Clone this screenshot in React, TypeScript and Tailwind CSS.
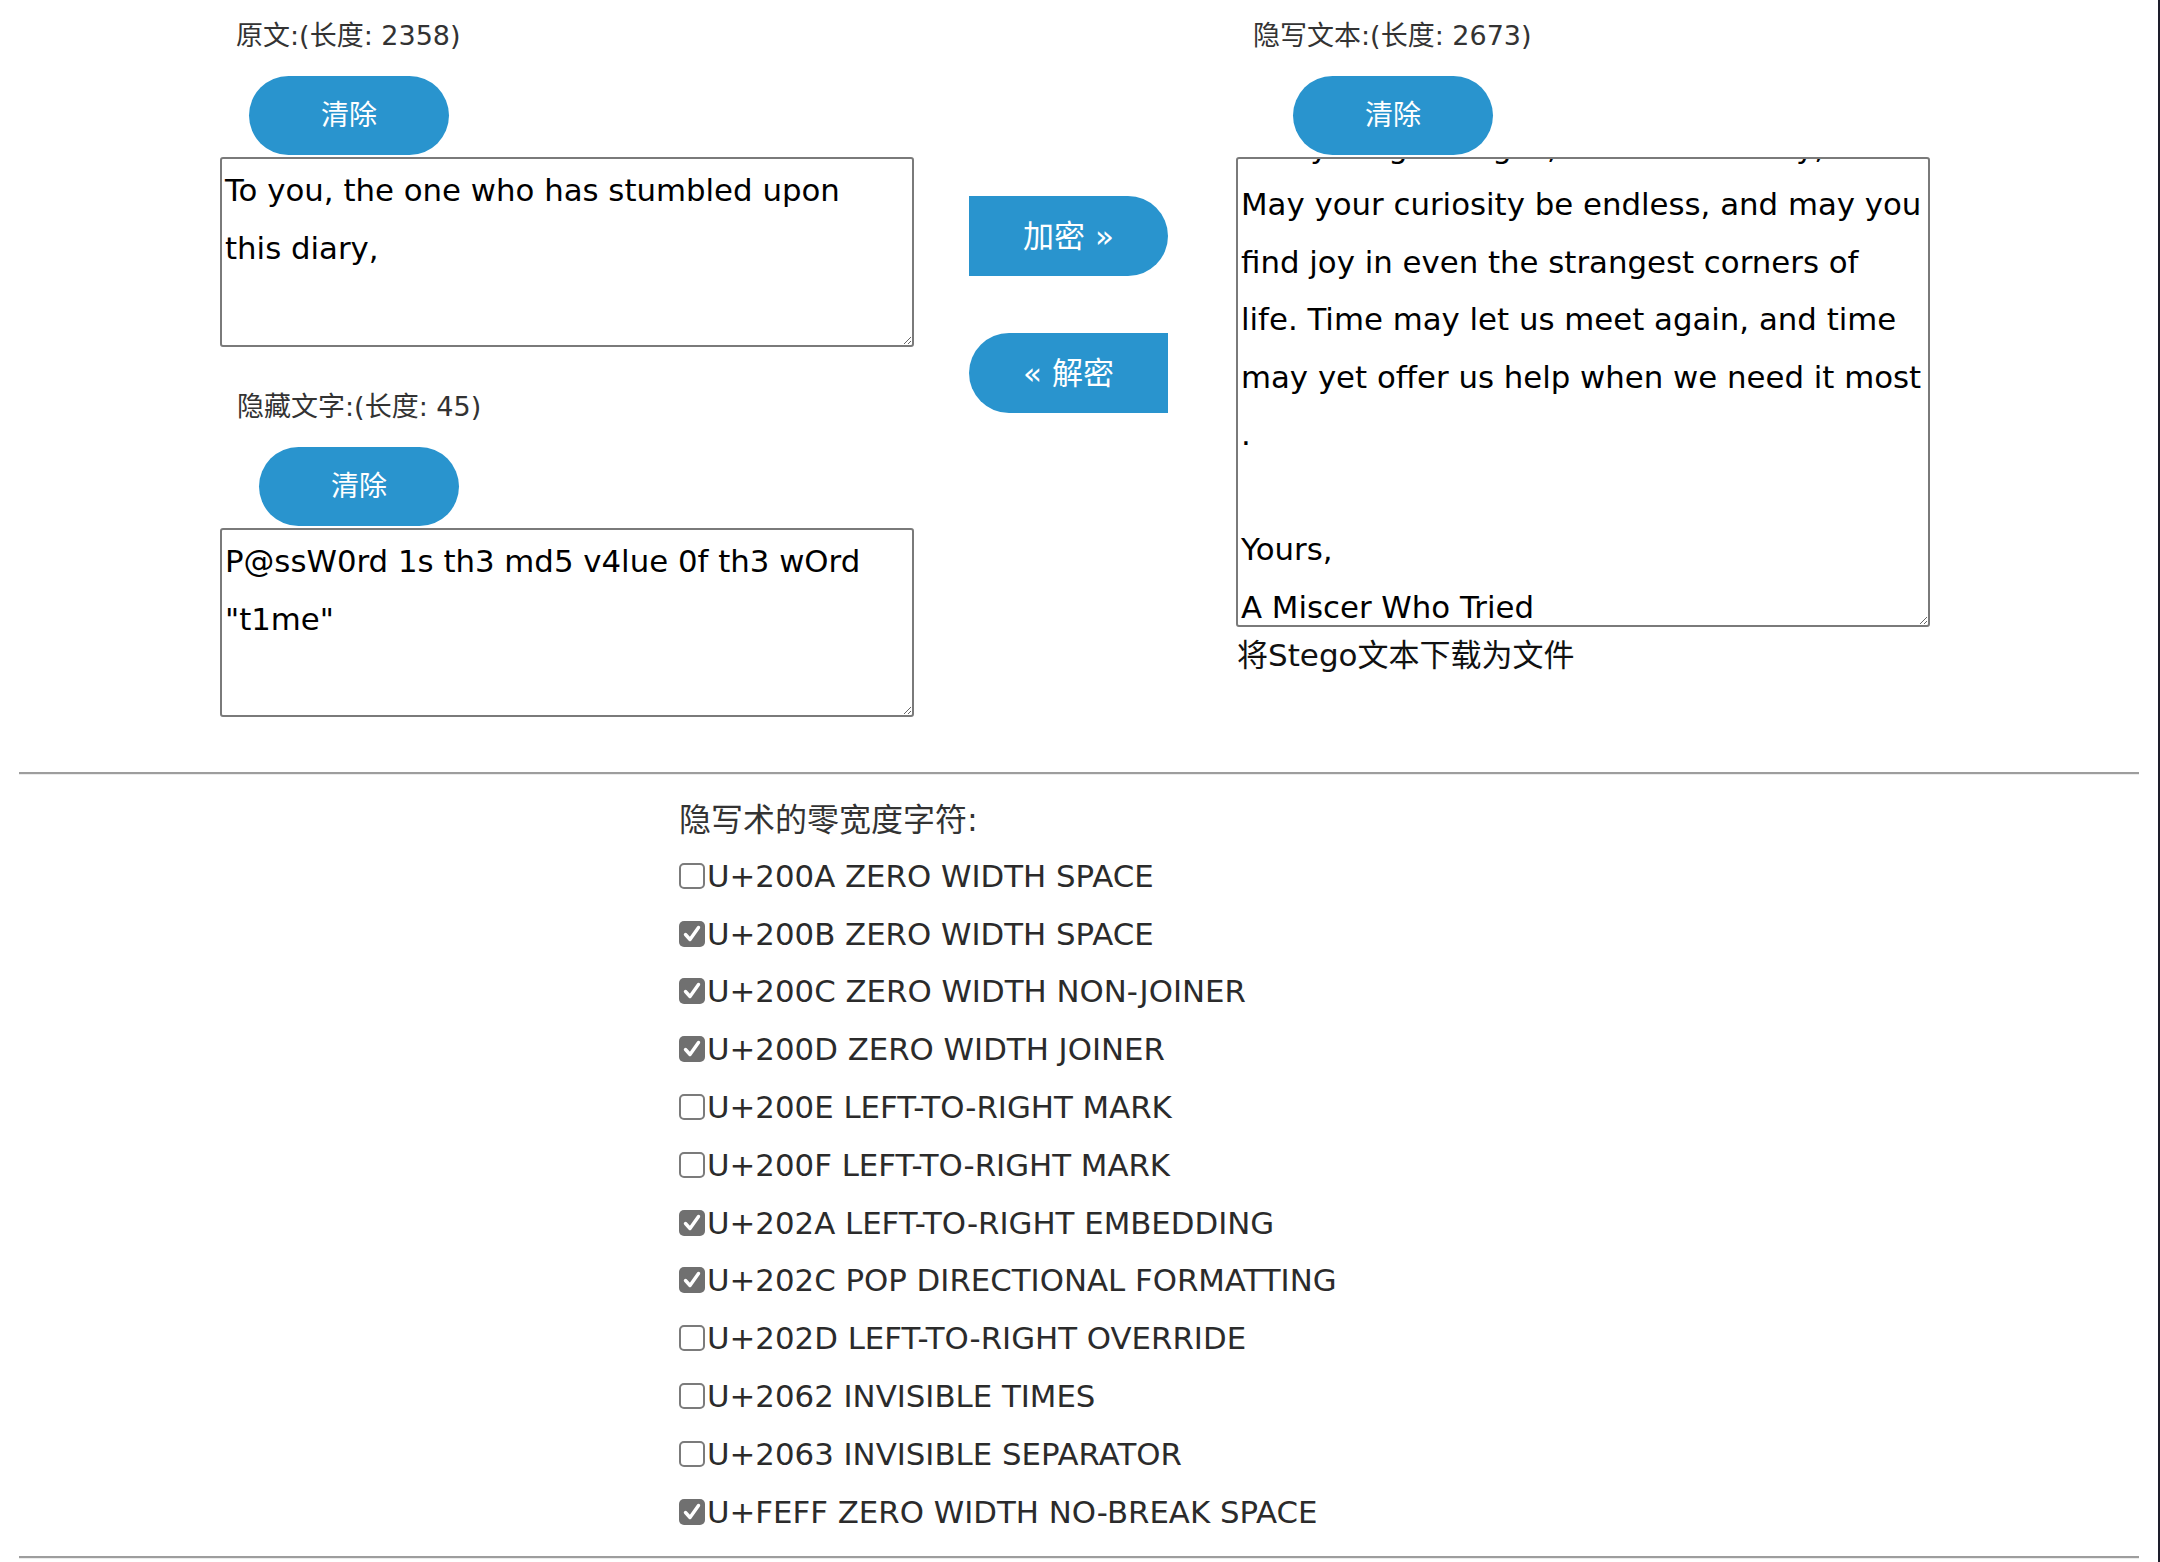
import React, { useLayoutEffect, useRef } from 'react';

const LINE = 57.5;

const original = [
  'To you, the one who has stumbled upon',
  'this diary,',
  '',
  'I do not know who you are, or how long',
  'these pages waited for you.',
];

const stego = [
  'To you, the one who has stumbled upon',
  'this diary,',
  '',
  'I do not know who you are, or how long',
  'these pages waited for you.',
  'Everything changes, and that is okay,',
  'May your curiosity be endless, and may you',
  'find joy in even the strangest corners of',
  'life. Time may let us meet again, and time',
  'may yet offer us help when we need it most',
  '.',
  '',
  'Yours,',
  'A Miscer Who Tried',
];

const hidden = ['P@ssW0rd 1s th3 md5 v4lue 0f th3 wOrd', '"t1me"'];

const chars: [string, boolean][] = [
  ['U+200A ZERO WIDTH SPACE', false],
  ['U+200B ZERO WIDTH SPACE', true],
  ['U+200C ZERO WIDTH NON-JOINER', true],
  ['U+200D ZERO WIDTH JOINER', true],
  ['U+200E LEFT-TO-RIGHT MARK', false],
  ['U+200F LEFT-TO-RIGHT MARK', false],
  ['U+202A LEFT-TO-RIGHT EMBEDDING', true],
  ['U+202C POP DIRECTIONAL FORMATTING', true],
  ['U+202D LEFT-TO-RIGHT OVERRIDE', false],
  ['U+2062 INVISIBLE TIMES', false],
  ['U+2063 INVISIBLE SEPARATOR', false],
  ['U+FEFF ZERO WIDTH NO-BREAK SPACE', true],
];

const Label = ({ children, className = '' }: { children: React.ReactNode; className?: string }) => (
  <div className={`h-[32px] text-[27px] leading-[32px] text-[#333] whitespace-nowrap ${className}`}>{children}</div>
);

const ClearButton = ({ className = '' }: { className?: string }) => (
  <button className={`w-[200px] h-[79px] rounded-full bg-[#2994ce] text-white text-[28px] ${className}`}>清除</button>
);

const Box = ({ lines, className = '', scrollTo }: { lines: string[]; className?: string; scrollTo?: number }) => {
  const ref = useRef<HTMLTextAreaElement>(null);
  useLayoutEffect(() => {
    if (ref.current && scrollTo !== undefined) ref.current.scrollTop = scrollTo;
  }, [scrollTo]);
  return (
    <textarea
      ref={ref}
      wrap="off"
      readOnly
      defaultValue={lines.join('\n')}
      className={`block w-[694px] p-[3px] border-2 border-[#7a7a7a] rounded-[3px] overflow-hidden text-[30.8px] leading-[57.5px] text-black outline-none ${className}`}
    />
  );
};

const Check = ({ on }: { on: boolean }) =>
  on ? (
    <span className="w-[26px] h-[26px] shrink-0 rounded-[5px] bg-[#707070] flex items-center justify-center">
      <svg width="22" height="22" viewBox="0 0 22 22">
        <path d="M4.5 11.5 L9 16.5 L17.5 4.5" fill="none" stroke="white" strokeWidth="3.4" strokeLinecap="round" strokeLinejoin="round" />
      </svg>
    </span>
  ) : (
    <span className="w-[26px] h-[26px] shrink-0 rounded-[5px] border-2 border-[#7b7b7b] bg-white" />
  );

export default function App() {
  const mayIdx = stego.findIndex((l) => l.startsWith('May your'));
  return (
    <div className="w-[2160px] h-[1562px] bg-white border-r-2 border-[#1d1d2b] font-['DejaVu_Sans','Noto_Sans_CJK_SC',sans-serif]">
      <div className="flex pt-[20px]">
        {/* left column */}
        <div className="ml-[220px] w-[694px] flex flex-col items-start">
          <Label className="ml-[16px]">原文:(长度: 2358)</Label>
          <ClearButton className="ml-[29px] mt-[24px]" />
          <Box lines={original} className="mt-[2px] h-[190px]" />
          <Label className="ml-[17px] mt-[44px]">隐藏文字:(长度: 45)</Label>
          <ClearButton className="ml-[39px] mt-[24px]" />
          <Box lines={hidden} className="mt-[2px] h-[189px]" />
        </div>

        {/* middle actions */}
        <div className="ml-[55px] flex flex-col">
          <button className="mt-[176px] w-[199px] h-[80px] rounded-l-[10px] rounded-r-full bg-[#2994ce] text-white text-[31px]">
            加密 »
          </button>
          <button className="mt-[57px] w-[199px] h-[80px] rounded-r-[10px] rounded-l-full bg-[#2994ce] text-white text-[31px]">
            « 解密
          </button>
        </div>

        {/* right column */}
        <div className="ml-[68px] w-[694px] flex flex-col items-start">
          <Label className="ml-[17px]">隐写文本:(长度: 2673)</Label>
          <ClearButton className="ml-[57px] mt-[24px]" />
          <Box lines={stego} className="mt-[2px] h-[470px]" scrollTo={mayIdx * LINE - 14.5} />
          <div className="mt-[10px] ml-[1px] text-[31px] leading-[36px] text-[#111] whitespace-nowrap">将Stego文本下载为文件</div>
        </div>
      </div>

      <div className="mx-[19px] mt-[55px] border-t-2 border-b border-t-[#9d9d9d] border-b-[#ececec]" />

      <div className="pl-[679px]">
        <div className="mt-[25px] h-[40px] text-[32px] leading-[40px] text-[#333]">隐写术的零宽度字符:</div>
        <div className="mt-[7px] flex flex-col">
          {chars.map(([name, on]) => (
            <label key={name} className="h-[57.8px] flex items-center gap-[2px] text-[30.8px] text-[#2b2b2b] whitespace-nowrap">
              <Check on={on} />
              <span>{name}</span>
            </label>
          ))}
        </div>
      </div>

      <div className="mx-[19px] mt-[15px] border-t-2 border-b border-t-[#9d9d9d] border-b-[#ececec]" />
    </div>
  );
}
